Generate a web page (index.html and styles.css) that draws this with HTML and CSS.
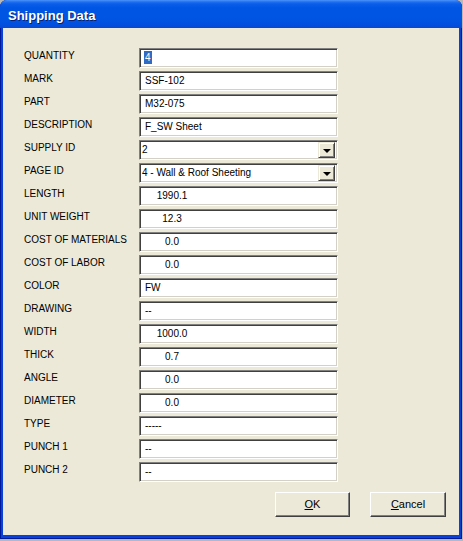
FILE: index.html
```
<!DOCTYPE html>
<html>
<head>
<meta charset="utf-8">
<title>Shipping Data</title>
<link rel="stylesheet" href="styles.css">
</head>
<body>
<div class="window">
  <div class="titlebar"><span class="title">Shipping Data</span></div>
  <div class="client">
    <div class="form">
      <div class="label">QUANTITY</div><div class="field"><span class="sel">4</span></div>
      <div class="label">MARK</div><div class="field">SSF-102</div>
      <div class="label">PART</div><div class="field">M32-075</div>
      <div class="label">DESCRIPTION</div><div class="field">F_SW Sheet</div>
      <div class="label">SUPPLY ID</div><div class="combo"><span class="combo-text">2</span><span class="drop"><span class="arrow"></span></span></div>
      <div class="label">PAGE ID</div><div class="combo"><span class="combo-text">4 - Wall &amp; Roof Sheeting</span><span class="drop"><span class="arrow"></span></span></div>
      <div class="label">LENGTH</div><div class="field num"><span class="val">1990.1</span></div>
      <div class="label">UNIT WEIGHT</div><div class="field num"><span class="val">12.3</span></div>
      <div class="label">COST OF MATERIALS</div><div class="field num"><span class="val">0.0</span></div>
      <div class="label">COST OF LABOR</div><div class="field num"><span class="val">0.0</span></div>
      <div class="label">COLOR</div><div class="field">FW</div>
      <div class="label">DRAWING</div><div class="field">--</div>
      <div class="label">WIDTH</div><div class="field num"><span class="val">1000.0</span></div>
      <div class="label">THICK</div><div class="field num"><span class="val">0.7</span></div>
      <div class="label">ANGLE</div><div class="field num"><span class="val">0.0</span></div>
      <div class="label">DIAMETER</div><div class="field num"><span class="val">0.0</span></div>
      <div class="label">TYPE</div><div class="field">-----</div>
      <div class="label">PUNCH 1</div><div class="field">--</div>
      <div class="label">PUNCH 2</div><div class="field">--</div>
    </div>
    <div class="buttons">
      <div class="btn"><u>O</u>K</div>
      <div class="btn"><u>C</u>ancel</div>
    </div>
  </div>
</div>
</body>
</html>
```
FILE: styles.css
```
html, body {
  margin: 0;
  padding: 0;
}
body {
  width: 463px;
  height: 541px;
  background: #b8b8b8;
  font-family: "Liberation Sans", Arial, sans-serif;
  overflow: hidden;
}
.window {
  width: 462px;
  height: 539px;
  box-sizing: border-box;
  background: #0840d8;
  border-radius: 7px 7px 0 0;
  box-shadow: inset 1px 0 0 #001a9c, inset -1px -1px 0 #001a9c;
  display: flex;
  flex-direction: column;
}
.titlebar {
  height: 28px;
  flex: none;
  border-radius: 7px 7px 0 0;
  background: linear-gradient(#4a94f8 0, #1f6ff2 2px, #0a5de9 4px, #0056e4 8px, #0055e3 60%, #0151e0 85%, #0848d4 100%);
  box-sizing: border-box;
  padding: 8px 0 0 8px;
}
.title {
  color: #fff;
  font-weight: bold;
  font-size: 13px;
  line-height: 15px;
  text-shadow: 1px 1px 0 #0a1e72;
  display: block;
}
.client {
  flex: 1;
  margin: 0 3px 4px 3px;
  background: #ece9d8;
  box-sizing: border-box;
  padding: 20px 13px 0 21px;
}
.form {
  display: grid;
  grid-template-columns: 115px 199px;
  grid-auto-rows: 20px;
  row-gap: 3px;
}
.label {
  font-size: 10px;
  line-height: 16px;
  color: #000;
  white-space: nowrap;
}
.field, .combo {
  box-sizing: border-box;
  height: 20px;
  background: #fff;
  border-top: 1px solid #808080;
  border-left: 1px solid #808080;
  border-bottom: 1px solid #fff;
  border-right: 1px solid #fff;
  box-shadow: inset 1px 1px 0 #404040, inset -1px -1px 0 #d4d0c8;
  font-size: 10px;
  line-height: 18px;
  padding-left: 5px;
  color: #000;
  white-space: nowrap;
}
.field.num {
  padding-left: 3px;
}
.val {
  display: inline-block;
  width: 58px;
  text-align: center;
}
.sel {
  display: inline-block;
  background: #316ac5;
  color: #fff;
  line-height: 13px;
  padding: 0 1px;
  margin-left: -1px;
}
.combo {
  display: flex;
  align-items: center;
  padding: 0 2px 0 2px;
}
.combo-text {
  flex: 1;
  line-height: 16px;
}
.drop {
  width: 17px;
  height: 16px;
  box-sizing: border-box;
  background: #ece9d8;
  border-top: 1px solid #ece9d8;
  border-left: 1px solid #ece9d8;
  border-right: 1px solid #404040;
  border-bottom: 1px solid #404040;
  box-shadow: inset 1px 1px 0 #fff, inset -1px -1px 0 #808080;
  display: flex;
  align-items: center;
  justify-content: center;
}
.arrow {
  width: 0;
  height: 0;
  border-left: 4px solid transparent;
  border-right: 4px solid transparent;
  border-top: 4px solid #000;
  margin-top: 1px;
}
.buttons {
  display: flex;
  justify-content: flex-end;
  gap: 20px;
  margin-top: 10px;
}
.btn {
  width: 75px;
  height: 25px;
  box-sizing: border-box;
  background: #ece9d8;
  border-top: 1px solid #fff;
  border-left: 1px solid #fff;
  border-right: 1px solid #404040;
  border-bottom: 1px solid #404040;
  box-shadow: inset -1px -1px 0 #808080;
  font-size: 11px;
  line-height: 23px;
  text-align: center;
  color: #000;
}
.btn + .btn {
  width: 76px;
}
```
